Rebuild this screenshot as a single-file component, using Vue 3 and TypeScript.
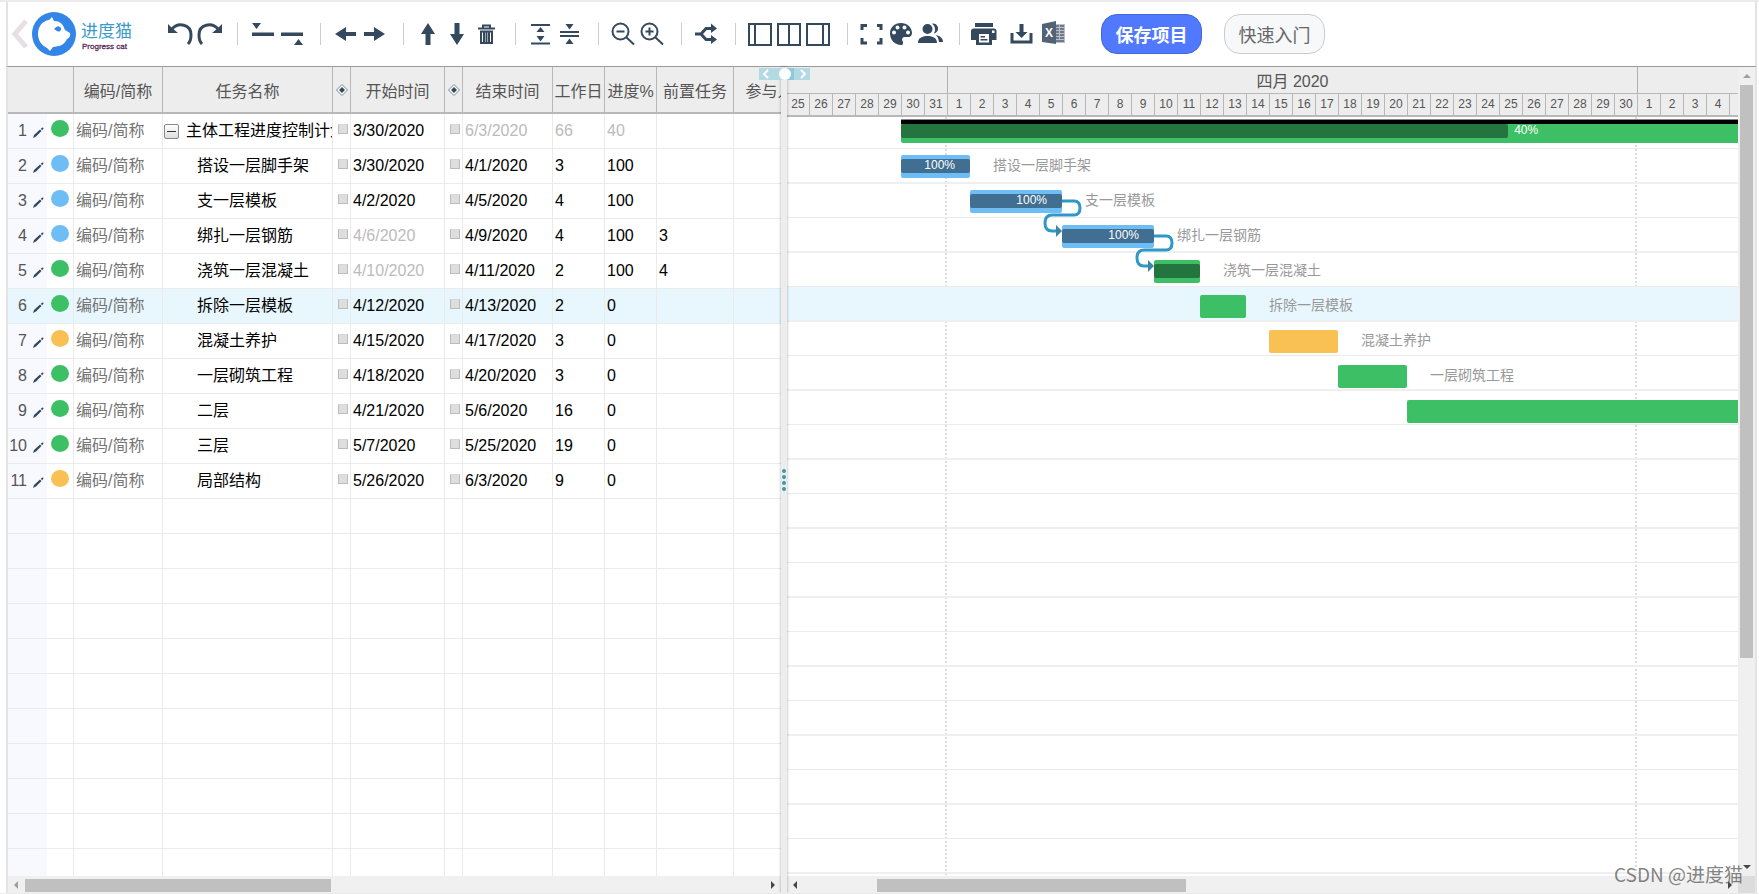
<script setup lang="ts">
type Tone = 'green' | 'blue' | 'orange'

interface Task {
  name: string
  tone: Tone
  start: string
  end: string
  days: string
  progress: string
  before?: string
  parent?: boolean
  active?: boolean
  mutedStart?: boolean
  mutedRest?: boolean
}

interface Bar {
  offset: number
  span: number
  tone: Tone
  done?: number
  inside?: string
  outside?: string
  label?: string
  parent?: boolean
}

interface Icon {
  label: string
  fill?: string
  line?: string
  width?: number
  excel?: boolean
}

const DAY = 23

const tasks: Task[] = [
  { name: '主体工程进度控制计划', tone: 'green', start: '3/30/2020', end: '6/3/2020', days: '66', progress: '40', parent: true, mutedRest: true },
  { name: '搭设一层脚手架', tone: 'blue', start: '3/30/2020', end: '4/1/2020', days: '3', progress: '100' },
  { name: '支一层模板', tone: 'blue', start: '4/2/2020', end: '4/5/2020', days: '4', progress: '100' },
  { name: '绑扎一层钢筋', tone: 'blue', start: '4/6/2020', end: '4/9/2020', days: '4', progress: '100', before: '3', mutedStart: true },
  { name: '浇筑一层混凝土', tone: 'green', start: '4/10/2020', end: '4/11/2020', days: '2', progress: '100', before: '4', mutedStart: true },
  { name: '拆除一层模板', tone: 'green', start: '4/12/2020', end: '4/13/2020', days: '2', progress: '0', active: true },
  { name: '混凝土养护', tone: 'orange', start: '4/15/2020', end: '4/17/2020', days: '3', progress: '0' },
  { name: '一层砌筑工程', tone: 'green', start: '4/18/2020', end: '4/20/2020', days: '3', progress: '0' },
  { name: '二层', tone: 'green', start: '4/21/2020', end: '5/6/2020', days: '16', progress: '0' },
  { name: '三层', tone: 'green', start: '5/7/2020', end: '5/25/2020', days: '19', progress: '0' },
  { name: '局部结构', tone: 'orange', start: '5/26/2020', end: '6/3/2020', days: '9', progress: '0' },
]

const bars: Bar[] = [
  { offset: 5, span: 66, tone: 'green', done: 40, outside: '40%', parent: true },
  { offset: 5, span: 3, tone: 'blue', done: 100, inside: '100%', label: '搭设一层脚手架' },
  { offset: 8, span: 4, tone: 'blue', done: 100, inside: '100%', label: '支一层模板' },
  { offset: 12, span: 4, tone: 'blue', done: 100, inside: '100%', label: '绑扎一层钢筋' },
  { offset: 16, span: 2, tone: 'green', done: 100, label: '浇筑一层混凝土' },
  { offset: 18, span: 2, tone: 'green', label: '拆除一层模板' },
  { offset: 21, span: 3, tone: 'orange', label: '混凝土养护' },
  { offset: 24, span: 3, tone: 'green', label: '一层砌筑工程' },
  { offset: 27, span: 16, tone: 'green' },
]

const months = [
  { label: '', first: 25, last: 31 },
  { label: '四月 2020', first: 1, last: 30 },
  { label: '', first: 1, last: 4 },
]
const days: number[] = months.flatMap(m => Array.from({ length: m.last - m.first + 1 }, (_, i) => m.first + i))
const monthEdges = [7, 37]

const emptyRows = 11
const stripes = 22

const groups: Icon[][] = [
  [
    { label: '撤销', fill: 'M1 2 L5 6 L11 11 H1Z', line: 'M5 7 C11 0 24 2 24 13 Q24 19 21 22', width: 3 },
    { label: '重做', fill: 'M26 2 L22 6 L16 11 H26Z', line: 'M22 7 C16 0 3 2 3 13 Q3 19 6 22', width: 3 },
  ],
  [
    { label: '升级', fill: 'M2 1H11L6.500 7Z M2 10.500H24V14H2Z' },
    { label: '降级', fill: 'M2 10.500H24V14H2Z M15 23H24L19.500 17Z' },
  ],
  [
    { label: '左移', fill: 'M2 12L13 5V10H23V14H13V19Z' },
    { label: '右移', fill: 'M23 12L12 5V10H2V14H12V19Z' },
  ],
  [
    { label: '上移', fill: 'M12 1L19 12H14.500V23H9.500V12H5Z' },
    { label: '下移', fill: 'M12 23L19 12H14.500V1H9.500V12H5Z' },
    { label: '删除', fill: 'M4 5.500H21V7.500H4Z', line: 'M9 6V3.500H16V6 M7 9.500V21H18V9.500Z M10 9V21 M12.500 9V21 M15 9V21', width: 2 },
  ],
  [
    { label: '展开', fill: 'M3 2H22V4H3Z M3 20.500H22V22.500H3Z M12.500 5L16.500 10H8.500Z M12.500 19.500L16.500 14H8.500Z' },
    { label: '折叠', fill: 'M3 9H22V11H3Z M3 13H22V15H3Z M12.500 7.500L16.500 2H8.500Z M12.500 16.500L16.500 22H8.500Z' },
  ],
  [
    { label: '缩小', line: 'M17.500 9.500A8 8 0 1 1 1.500 9.500A8 8 0 1 1 17.500 9.500Z M15 15L23 22.500 M5.500 9.500H13.500', width: 2 },
    { label: '放大', line: 'M17.500 9.500A8 8 0 1 1 1.500 9.500A8 8 0 1 1 17.500 9.500Z M15 15L23 22.500 M5.500 9.500H13.500 M9.500 5.500V13.500', width: 2 },
  ],
  [
    { label: '关联', fill: 'M17 1.500L23 6.500L17 11Z M17 13L23 17.500L17 22Z', line: 'M1 12H7L12 6.500H18 M7 12L12 17.500H18', width: 3 },
  ],
  [
    { label: '左侧视图', line: 'M1 2H23V23H1Z M7 2V23', width: 2 },
    { label: '双栏视图', line: 'M1 2H23V23H1Z M12 2V23', width: 2 },
    { label: '右侧视图', line: 'M1 2H23V23H1Z M17 2V23', width: 2 },
  ],
  [
    { label: '全屏', line: 'M2 8V3.500H7 M17 3.500H21V8 M21 16V21H17 M7 21H2V16', width: 3 },
    { label: '主题', fill: 'M12 1C5.500 1 1 5.500 1 11.500C1 18 6 23 12 23C14.500 23 14.500 20.500 13.500 19C12.500 17 13.500 15 16 15H19C22 15 23 13 23 10.500C22.500 5 18 1 12 1ZM5 8.500A2 2 0 1 1 5 12.500A2 2 0 1 1 5 8.500ZM8.500 3.500A2 2 0 1 1 8.500 7.500A2 2 0 1 1 8.500 3.500ZM15.500 3.500A2 2 0 1 1 15.500 7.500A2 2 0 1 1 15.500 3.500ZM19 8.500A2 2 0 1 1 19 12.500A2 2 0 1 1 19 8.500Z' },
    { label: '成员', fill: 'M9.500 2A5 5 0 1 1 9.500 12A5 5 0 1 1 9.500 2Z M0 21C0 16 4 14 9.500 14S19 16 19 21Z M14 1.500A5 5 0 1 1 16 11.500Q19 6 14 1.500Z M18 13C22 14 25 16 25 20H21Q21 16 18 13Z' },
  ],
  [
    { label: '打印', fill: 'M3 1H21V5H3Z M2 6.500H22Q24.500 6.500 24.500 9V18H20V23H4V18H-1V9Q-1 6.500 2 6.500ZM7 12V20.500H17V12ZM20 8.500V11H22.500V8.500Z M8.500 14H13V15.500H8.500Z M8.500 17H15.500V18.500H8.500Z' },
    { label: '下载', fill: 'M12.500 2H16.500V10H20.500L14.500 16L8.500 10H12.500Z', line: 'M5 11V20H24V11', width: 3 },
    { label: '导出表格', excel: true },
  ],
]
</script>

<template>
  <div class="app">
    <header class="toolbar">
      <button class="back" type="button" aria-label="返回">
        <svg width="18" height="30" viewBox="0 0 18 30"><path d="M15 2L4 15L15 28" /></svg>
      </button>
      <a class="brand" href="#">
        <svg width="44" height="44" viewBox="0 0 44 44" aria-hidden="true">
          <circle cx="22" cy="22" r="22" fill="#3385e8" />
          <path d="M20 5L22 9C28 9 31 12 33 18L38 21Q39 25 35 27C32 34 27 34 21 35L18 39L15 36C9 33 6 28 6 22C6 15 10 9 17 8Z" fill="#fff" />
          <path d="M22 17Q26 12 29 16Q29 21 25 19Z" fill="#3385e8" />
        </svg>
        <span class="words">
          <span class="zh">进度猫</span>
          <span class="en">Progress cat</span>
        </span>
      </a>
      <div v-for="(group, g) in groups" :key="g" class="group">
        <button v-for="icon in group" :key="icon.label" type="button" class="tool" :aria-label="icon.label">
          <svg width="24" height="24" viewBox="0 0 24 24" aria-hidden="true">
            <template v-if="icon.excel">
              <path d="M13 2H23V21H13Z" fill="#b9c0c8" />
              <path d="M14 4H17M18 4H22M14 7H17M18 7H22M14 10H17M18 10H22M14 13H17M18 13H22M14 16H17M18 16H22M14 19H22" stroke="#536375" stroke-width="1.500" />
              <path d="M0 2L14 -1V22L0 20Z" fill="#536375" />
              <text x="3" y="15" font-size="12" font-weight="bold" fill="#fff">X</text>
            </template>
            <path v-if="icon.fill" :d="icon.fill" fill="#34495e" fill-rule="evenodd" />
            <path v-if="icon.line" :d="icon.line" fill="none" stroke="#34495e" :stroke-width="icon.width" />
          </svg>
        </button>
      </div>
      <button type="button" class="pill save">保存项目</button>
      <button type="button" class="pill guide">快速入门</button>
    </header>

    <main class="panes">
      <section class="left">
        <div class="sheet">
          <table>
            <colgroup>
              <col class="c-no"><col class="c-code"><col class="c-name"><col class="c-flag"><col class="c-start"><col class="c-flag">
              <col class="c-end"><col class="c-num"><col class="c-num"><col class="c-before"><col class="c-who">
            </colgroup>
            <thead>
              <tr>
                <th></th>
                <th>编码/简称</th>
                <th>任务名称</th>
                <th><svg class="gem" width="12" height="12" viewBox="0 0 12 12"><path d="M6 .5L11.500 6L6 11.500L.5 6Z" fill="#fff" stroke="#7b8794" /><path d="M6 3L9 6L6 9L3 6Z" fill="#34495e" /></svg></th>
                <th>开始时间</th>
                <th><svg class="gem" width="12" height="12" viewBox="0 0 12 12"><path d="M6 .5L11.500 6L6 11.500L.5 6Z" fill="#fff" stroke="#7b8794" /><path d="M6 3L9 6L6 9L3 6Z" fill="#34495e" /></svg></th>
                <th>结束时间</th>
                <th>工作日</th>
                <th>进度%</th>
                <th>前置任务</th>
                <th>参与人</th>
              </tr>
            </thead>
            <tbody>
              <tr v-for="(t, i) in tasks" :key="t.name" :class="{ active: t.active }">
                <td class="no">
                  <div class="index">
                    <span class="count">{{ i + 1 }}</span>
                    <svg width="11" height="11" viewBox="0 0 11 11" aria-hidden="true"><path d="M0 11L1 8L7 2.500L8.500 4L3 9.500Z M7.800 1.800L9 .8Q10.500 0 10.500 1.500L9.200 3.200Z" fill="#34495e" /></svg>
                    <span class="dot" :class="t.tone"></span>
                  </div>
                </td>
                <td class="code">编码/简称</td>
                <td>
                  <div class="title" :class="{ child: !t.parent }">
                    <button v-if="t.parent" type="button" class="toggle" aria-label="收起"></button>
                    <span>{{ t.name }}</span>
                  </div>
                </td>
                <td class="flag"><input type="checkbox" :aria-label="t.name + ' 开始里程碑'"></td>
                <td :class="{ muted: t.mutedStart }">{{ t.start }}</td>
                <td class="flag"><input type="checkbox" :aria-label="t.name + ' 结束里程碑'"></td>
                <td :class="{ muted: t.mutedRest }">{{ t.end }}</td>
                <td :class="{ muted: t.mutedRest }">{{ t.days }}</td>
                <td :class="{ muted: t.mutedRest }">{{ t.progress }}</td>
                <td>{{ t.before }}</td>
                <td></td>
              </tr>
              <tr v-for="n in emptyRows" :key="'e' + n">
                <td class="no"></td>
                <td v-for="c in 10" :key="c"></td>
              </tr>
            </tbody>
          </table>
        </div>
        <div class="hbar">
          <i class="arrow west faint"></i>
          <div class="track"><div class="thumb at-start"></div></div>
          <i class="arrow east"></i>
        </div>
      </section>

      <div class="splitter">
        <div class="grip"><i></i><i></i><i></i><i></i></div>
        <svg class="shift" width="52" height="14" viewBox="0 0 52 14" aria-hidden="true">
          <path d="M0 1H51V13H0Z" fill="#b3d9e3" />
          <path d="M26 1H35V13H26Z" fill="#8fcadb" />
          <path d="M9 3L5 7L9 11 M42 3L46 7L42 11" fill="none" stroke="#fff" stroke-width="2" />
          <circle cx="26" cy="7" r="6" fill="#fff" />
        </svg>
      </div>

      <section class="right">
        <div class="chart">
          <div class="months">
            <div v-for="(m, i) in months" :key="i" class="month" :style="{ width: (m.last - m.first + 1) * DAY + 'px' }">{{ m.label }}</div>
          </div>
          <div class="days">
            <div v-for="(d, i) in days" :key="i" class="day">{{ d }}</div>
          </div>
          <div class="canvas">
            <div v-for="e in monthEdges" :key="e" class="edge" :style="{ left: e * DAY - 3 + 'px' }"></div>
            <div v-for="n in stripes" :key="n" class="stripe" :class="{ active: n === 6 }"></div>
            <div class="bars">
              <div v-for="(b, i) in bars" :key="i" class="lane" :style="{ paddingLeft: b.offset * DAY - 1 + 'px' }">
                <div class="bar" :class="[b.tone, { parent: b.parent }]" :style="{ width: b.span * DAY + 'px' }">
                  <div v-if="b.done" class="done" :style="{ width: b.done + '%' }"><span v-if="b.inside">{{ b.inside }}</span></div>
                  <span v-if="b.outside" class="after">{{ b.outside }}</span>
                </div>
                <span v-if="b.label" class="label">{{ b.label }}</span>
              </div>
            </div>
            <svg class="links" width="500" height="160" viewBox="0 0 500 160" aria-hidden="true">
              <g v-for="k in 2" :key="k" :transform="`translate(${275 + (k - 1) * 92} ${84 + (k - 1) * 35})`">
                <path d="M0 0H12Q18 0 18 7T12 14H-10Q-17 14 -17 22T-10 30H-3" fill="none" stroke="#3098c8" stroke-width="3" />
                <path d="M-6 24L0 30L-6 36Z" fill="#3d87a5" />
              </g>
            </svg>
          </div>
          <div class="hbar">
            <i class="arrow west"></i>
            <div class="track"><div class="thumb at-middle"></div></div>
            <i class="arrow east"></i>
          </div>
        </div>
        <div class="vbar">
          <i class="arrow north faint"></i>
          <div class="vtrack"><div class="vthumb"></div></div>
          <i class="arrow south"></i>
          <div class="corner"></div>
        </div>
      </section>
    </main>
    <div class="watermark">CSDN @进度猫</div>
  </div>
</template>

<style>
body {
  margin: 0;
  background: #fff;
}
</style>

<style scoped>
* {
  box-sizing: border-box;
}
.app {
  position: relative;
  display: flex;
  flex-direction: column;
  height: 100vh;
  padding: 0 2px 0 6px;
  border-top: 2px solid #ececec;
  border-bottom: 1px solid #ececec;
  overflow: hidden;
  font-family: "Liberation Sans", "Noto Sans CJK SC", sans-serif;
  font-size: 16px;
  color: #000;
}
button {
  margin: 0;
  padding: 0;
  border: 0;
  background: none;
  font-family: inherit;
  cursor: pointer;
}
svg {
  display: block;
  overflow: visible;
}
.toolbar {
  flex: none;
  display: flex;
  align-items: center;
  height: 65px;
  padding: 0 0 1px 3px;
  border: 2px solid #e4e4e4;
  border-width: 0 2px 1px 2px;
  border-bottom-color: #999;
}
.back path {
  fill: none;
  stroke: #e6dfe6;
  stroke-width: 5;
}
.brand {
  display: flex;
  gap: 5px;
  width: 135px;
  margin-left: 3px;
  text-decoration: none;
}
.words {
  display: flex;
  flex-direction: column;
  padding-top: 10px;
}
.zh {
  font-size: 17px;
  line-height: 20px;
  color: #3b9ac8;
}
.en {
  padding-left: 1px;
  font-size: 8px;
  line-height: 10px;
  color: #5a2d5a;
  -webkit-text-stroke: 0.3px #5a2d5a;
}
.group {
  display: flex;
  align-items: center;
  gap: 5px;
}
.group + .group::before {
  content: "";
  width: 1px;
  height: 22px;
  margin: 0 7px 0 17px;
  background: #ccc;
}
.group:nth-last-of-type(1) .tool + .tool {
  margin-left: 6px;
}
.tool {
  width: 24px;
  height: 24px;
}
.pill {
  width: 101px;
  height: 40px;
  border: 1px solid #ccc;
  border-radius: 16px;
  font-size: 18px;
}
.save {
  margin-left: 35px;
  border-color: #4368d6;
  background: #5079ff;
  color: #fff;
  font-weight: bold;
}
.guide {
  margin-left: 22px;
  background: #f7f8fa;
  color: #666;
}
.panes {
  flex: 1;
  display: grid;
  grid-template-columns: minmax(0, 773fr) 6px minmax(0, 968fr);
  min-height: 0;
  border: 2px solid #e4e4e4;
  border-width: 0 2px;
}
.left,
.chart {
  display: flex;
  flex-direction: column;
  min-width: 0;
  min-height: 0;
}
.sheet {
  flex: 1;
  min-height: 0;
  overflow: hidden;
}
table {
  width: 798px;
  table-layout: fixed;
  border-collapse: separate;
  border-spacing: 0;
}
.c-no { width: 66px; }
.c-code { width: 89px; }
.c-name { width: 170px; }
.c-flag { width: 18px; }
.c-start { width: 94px; }
.c-end { width: 90px; }
.c-num { width: 52px; }
.c-before { width: 77px; }
.c-who { width: 72px; }
th {
  height: 47px;
  padding: 0;
  border-right: 1px solid #b8b8b8;
  border-bottom: 2px solid #b8b8b8;
  background: #ededed;
  color: #555;
  font-weight: normal;
  white-space: nowrap;
}
.gem {
  margin: 0 auto;
}
td {
  height: 35px;
  padding: 0 0 0 2px;
  border-right: 1px solid #ebebeb;
  border-bottom: 1px solid #ebebeb;
  line-height: 24px;
  white-space: nowrap;
  overflow: hidden;
}
.no {
  padding: 0;
  background: linear-gradient(to right, #f7f9ff 39px, transparent 39px);
}
.active td {
  background: #e8f7fe;
}
.index {
  display: flex;
  align-items: center;
  color: #555;
}
.index svg {
  margin: 3px 7px 0 6px;
}
.count {
  width: 19px;
  text-align: right;
}
.dot {
  width: 18px;
  height: 17px;
  margin-bottom: 5px;
  border-radius: 50%;
}
.green { background: #3dbf66; }
.blue { background: #6ebdf4; }
.orange { background: #f9c154; }
.code {
  color: #757575;
}
.title {
  display: flex;
  align-items: center;
  gap: 7px;
  margin-left: -1px;
}
.child {
  padding-left: 33px;
}
.toggle {
  display: flex;
  flex: none;
  align-items: center;
  justify-content: center;
  width: 15px;
  height: 15px;
  border: 1px solid #888;
  border-radius: 2px;
  background: linear-gradient(#fff, #ddd);
}
.toggle::before {
  content: "";
  width: 9px;
  height: 1px;
  background: #333;
}
.flag {
  padding: 0 0 0 5px;
}
.flag input {
  display: block;
  width: 10px;
  height: 10px;
  margin: 0 0 4px;
  appearance: none;
  border: 1px solid #bbb;
  border-top-color: #d8d8d8;
  background: #dedede;
}
.muted {
  color: #bbb;
}
.splitter {
  position: relative;
  z-index: 2;
  display: flex;
  align-items: center;
  justify-content: center;
  background: #ededed;
  box-shadow: 0 0 3px rgba(0, 0, 0, 0.35);
}
.grip {
  display: flex;
  flex-direction: column;
  gap: 2px;
}
.grip i {
  width: 4px;
  height: 4px;
  border-radius: 50%;
  background: #3c97ac;
}
.shift {
  position: absolute;
  top: 0;
  left: -22px;
}
.right {
  display: flex;
  min-height: 0;
}
.chart {
  flex: 1;
}
.months,
.days {
  flex: none;
  display: flex;
  overflow: hidden;
  background: #ededed;
  color: #555;
}
.months {
  height: 27px;
  border-bottom: 1px solid #b8b8b8;
}
.month {
  flex: none;
  border-right: 1px solid #b0b0b0;
  line-height: 29px;
  text-align: center;
}
.month:last-child {
  border-right: 0;
}
.days {
  height: 23px;
  border-bottom: 2px solid #b8b8b8;
}
.day {
  flex: none;
  width: 23px;
  border-right: 1px solid #b8b8b8;
  font-size: 12px;
  line-height: 20px;
  text-align: center;
}
.canvas {
  position: relative;
  flex: 1;
  min-height: 0;
  overflow: hidden;
}
.edge {
  position: absolute;
  top: 0;
  bottom: 0;
  width: 2px;
  background: repeating-linear-gradient(#dcdcdc 0 2px, transparent 2px 4px);
}
.stripe {
  position: relative;
  height: 34px;
  border-bottom: 1px solid #ebebeb;
}
.stripe:nth-of-type(3) {
  height: 32px;
}
.stripe:nth-of-type(2n) {
  height: 35px;
  border-bottom: 2px solid #efefef;
}
.stripe.active {
  background: #e8f7fe;
}
.bars {
  position: absolute;
  top: 3px;
  left: 0;
  right: 0;
  display: flex;
  flex-direction: column;
  gap: 12px;
}
.lane {
  display: flex;
  height: 23px;
}
.bar {
  position: relative;
  flex: none;
  display: flex;
  padding-top: 4px;
  border-radius: 2px;
  font-size: 12px;
  line-height: 12px;
  color: #fff;
}
.parent::before {
  content: "";
  position: absolute;
  top: -1px;
  left: 0;
  right: 0;
  height: 4px;
  border-top: 1px solid #888;
  background: #000;
}
.done {
  flex: none;
  height: 14px;
  padding-right: 15px;
  border-radius: 2px;
  background: #24743f;
  text-align: right;
}
.blue .done {
  background: #416f91;
}
.after {
  margin-left: 6px;
}
.label {
  margin-left: 23px;
  font-size: 14px;
  line-height: 20px;
  color: #999;
  white-space: nowrap;
}
.links {
  position: absolute;
  top: 0;
  left: 0;
}
.hbar {
  flex: none;
  display: flex;
  align-items: center;
  height: 17px;
  padding: 1px 6px 0;
  background: #f0f0f0;
}
.track {
  flex: 1;
  margin: 0 7px;
}
.thumb {
  height: 13px;
  background: #c0c0c0;
}
.at-start {
  width: 41.4%;
}
.at-middle {
  width: 33.7%;
  margin-left: 8%;
}
.vbar {
  flex: none;
  display: flex;
  flex-direction: column;
  align-items: center;
  width: 17px;
  padding-top: 7px;
  background: #f0f0f0;
}
.vtrack {
  flex: 1;
  width: 13px;
  margin: 7px 0 6px;
}
.vthumb {
  height: 74%;
  background: #c0c0c0;
}
.corner {
  width: 17px;
  height: 17px;
  margin-top: 7px;
  background: #dcdcdc;
}
.arrow {
  width: 0;
  height: 0;
  border: 4px solid transparent;
  color: #484848;
}
.faint {
  color: #a0a0a0;
}
.west {
  border-left-width: 0;
  border-right-color: currentColor;
}
.east {
  border-right-width: 0;
  border-left-color: currentColor;
}
.north {
  border-top-width: 0;
  border-bottom-color: currentColor;
}
.south {
  border-bottom-width: 0;
  border-top-color: currentColor;
}
.watermark {
  position: absolute;
  right: 16px;
  bottom: 5px;
  z-index: 3;
  font-family: "Noto Sans CJK SC", sans-serif;
  font-size: 19px;
  line-height: 28px;
  color: rgba(90, 90, 90, 0.75);
}
</style>
